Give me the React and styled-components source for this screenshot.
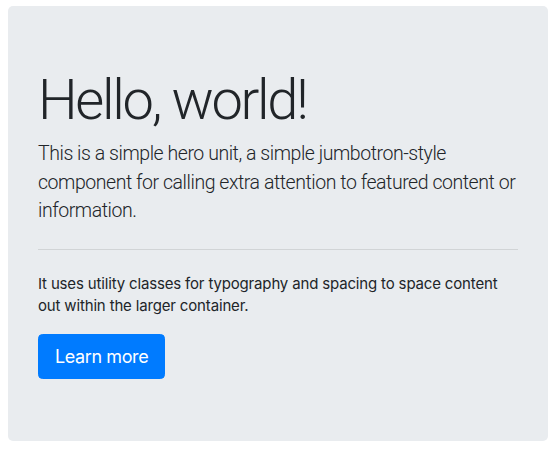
import React from 'react';
import styled, { createGlobalStyle } from 'styled-components';

const GlobalStyle = createGlobalStyle`
  body {
    margin: 0;
    font-family: Inter, "Noto Sans", "Liberation Sans", sans-serif;
    color: #212529;
    background: #fff;
    -webkit-font-smoothing: antialiased;
  }
`;

const Jumbotron = styled.section`
  width: 540px;
  margin: 6px 0 0 8px;
  padding: 61px 30px 62px;
  box-sizing: border-box;
  background: #e9ecef;
  border-radius: 5px;
`;

const Display = styled.h1`
  margin: 0 0 6px;
  font-family: Roboto, Inter, sans-serif;
  font-size: 56px;
  font-weight: 300;
  line-height: 1.2;
  letter-spacing: -2.3px;
`;

const Lead = styled.p`
  margin: 0;
  font-family: Roboto, Inter, sans-serif;
  font-size: 19.5px;
  font-weight: 300;
  line-height: 28.5px;
  letter-spacing: -0.45px;
`;

const Divider = styled.hr`
  margin: 23px 0 23px;
  border: 0;
  border-top: 1px solid rgba(0, 0, 0, 0.1);
`;

const Text = styled.p`
  margin: 0 0 16px;
  font-size: 15px;
  line-height: 22.5px;
  letter-spacing: -0.16px;
`;

const Button = styled.a`
  display: inline-block;
  padding: 8px 16px;
  font-size: 18px;
  line-height: 27px;
  letter-spacing: -0.4px;
  color: #fff;
  background: #007bff;
  border: 1px solid #007bff;
  border-radius: 4.5px;
  text-decoration: none;
  cursor: pointer;
`;

const App = () => (
  <>
    <GlobalStyle />
    <Jumbotron>
      <Display>Hello, world!</Display>
      <Lead>
        This is a simple hero unit, a simple jumbotron-style component for calling extra attention to featured content or information.
      </Lead>
      <Divider />
      <Text>
        It uses utility classes for typography and spacing to space content out within the larger container.
      </Text>
      <Button href="#" role="button">Learn more</Button>
    </Jumbotron>
  </>
);

export default App;
